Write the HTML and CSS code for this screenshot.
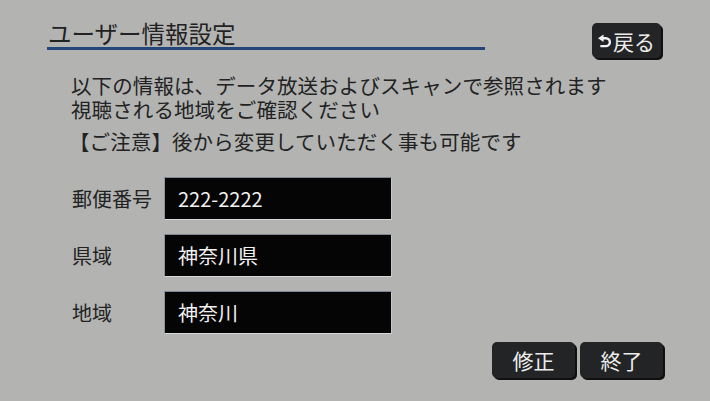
FILE: index.html
```html
<!DOCTYPE html>
<html lang="ja">
<head>
<meta charset="utf-8">
<link rel="stylesheet" href="styles.css">
</head>
<body>
<div class="screen">
  <header class="header">
    <h1 class="title">ユーザー情報設定</h1>
    <button class="btn btn-back">
      <svg class="back-icon" viewBox="0 0 14 16" width="13" height="15">
        <path d="M5 4.5 H8.5 A4.25 4.25 0 0 1 8.5 13 H2.5" fill="none" stroke="#f2f2f2" stroke-width="2.6"/>
        <polygon points="0,4.5 6,0.5 6,8.5" fill="#f2f2f2"/>
      </svg>
      <span>戻る</span>
    </button>
  </header>

  <div class="message">
    <p class="line">以下の情報は、データ放送およびスキャンで参照されます</p>
    <p class="line">視聴される地域をご確認ください</p>
    <p class="line note">【ご注意】後から変更していただく事も可能です</p>
  </div>

  <div class="form">
    <div class="row">
      <span class="label">郵便番号</span>
      <div class="field">222-2222</div>
    </div>
    <div class="row">
      <span class="label">県域</span>
      <div class="field">神奈川県</div>
    </div>
    <div class="row">
      <span class="label">地域</span>
      <div class="field">神奈川</div>
    </div>
  </div>

  <div class="actions">
    <button class="btn btn-action">修正</button>
    <button class="btn btn-action">終了</button>
  </div>
</div>
</body>
</html>
```

FILE: styles.css
```css
html, body {
  margin: 0;
  padding: 0;
}
body {
  background: #b3b4b2;
  font-family: "Noto Sans CJK JP", "Noto Sans", sans-serif;
  color: #222222;
  width: 710px;
  height: 401px;
  overflow: hidden;
}
.screen {
  display: flex;
  flex-direction: column;
}
.header {
  display: flex;
  align-items: flex-start;
  padding: 23px 0 0 47px;
}
.title {
  margin: 0;
  width: 437px;
  font-size: 23.5px;
  font-weight: normal;
  line-height: 20px;
  padding: 0 0 4px 1px;
  box-sizing: content-box;
  border-bottom: 3px solid #22467a;
  color: #222222;
  white-space: nowrap;
}
.btn {
  font-family: "Noto Sans CJK JP", "Noto Sans", sans-serif;
  background: #232425;
  color: #ececec;
  border: none;
  border-radius: 5px;
  box-shadow: 2px 2px 0 #101010;
  padding: 0;
  display: flex;
  align-items: center;
  justify-content: center;
}
.btn-back {
  margin-left: 107px;
  width: 69px;
  height: 35px;
  font-size: 21px;
  gap: 2px;
}
.back-icon {
  display: block;
  margin-top: 1px;
}
.message {
  margin-top: 15px;
  padding-left: 71px;
}
.line {
  margin: 0;
  font-size: 20.5px;
  line-height: 24px;
  white-space: nowrap;
  letter-spacing: 0.1px;
}
.note {
  margin-top: 8px;
  margin-left: -2px;
}
.form {
  margin-top: 24px;
  display: flex;
  flex-direction: column;
  gap: 14px;
}
.row {
  display: flex;
  align-items: center;
  padding-left: 72px;
}
.label {
  width: 92px;
  font-size: 20px;
  line-height: 24px;
}
.field {
  width: 213px;
  height: 41px;
  background: #050505;
  border-top: 1px solid #7d8893;
  border-left: 1px solid #8a949c;
  border-bottom: 1px solid #d6d9db;
  border-right: 1px solid #c3c7c9;
  color: #f2f2f2;
  font-size: 20px;
  line-height: 41px;
  padding-left: 13px;
}
.actions {
  margin-top: 8px;
  display: flex;
  justify-content: flex-end;
  gap: 5px;
  padding-right: 47px;
}
.btn-action {
  width: 83px;
  height: 36px;
  font-size: 21px;
}
```
